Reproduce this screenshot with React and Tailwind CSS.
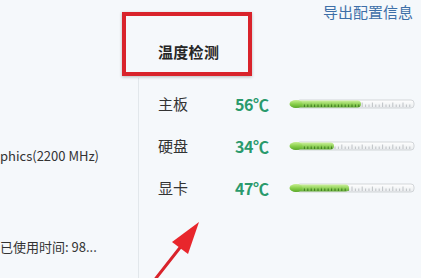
import React from 'react';

const FONT = "font-['Noto_Sans_CJK_SC','Noto_Sans',sans-serif]";

const ROWS = [
  { label: '主板', temp: 56, fill: 72 },
  { label: '硬盘', temp: 34, fill: 45 },
  { label: '显卡', temp: 47, fill: 60 },
];

function Thermo({ fill }) {
  const ticks = [];
  for (let x = 12; x < 122; x += 3.4) ticks.push(x);
  return (
    <svg width="126" height="12" viewBox="0 0 126 12">
      <defs>
        <linearGradient id="tube" x1="0" y1="0" x2="0" y2="1">
          <stop offset="0" stopColor="#ffffff" />
          <stop offset="1" stopColor="#e9ecee" />
        </linearGradient>
        <linearGradient id="green" x1="0" y1="0" x2="0" y2="1">
          <stop offset="0" stopColor="#c8ef92" />
          <stop offset="0.5" stopColor="#8ad04c" />
          <stop offset="1" stopColor="#5aa82a" />
        </linearGradient>
      </defs>
      <rect x="8" y="2" width="117" height="8" rx="3" fill="url(#tube)" stroke="#c9cdd0" strokeWidth="0.8" />
      {ticks.map((x, i) => (
        <line key={i} x1={x} x2={x} y1={i % 3 === 0 ? 4.5 : 6.5} y2="9"
          stroke={x < fill ? '#3f7d22' : '#a9aeb2'} strokeWidth="0.7" />
      ))}
      <rect x="3" y="2.5" width={fill - 3} height="7" rx="3.5" fill="url(#green)" opacity="0.9" />
      {ticks.filter(x => x > 12 && x < fill - 2).map((x, i) => (
        <line key={'d' + i} x1={x} x2={x} y1="6.5" y2="9" stroke="#356d1c" strokeWidth="0.8" />
      ))}
      <ellipse cx="7" cy="6" rx="6.5" ry="4" fill="url(#green)" />
    </svg>
  );
}

export default function App() {
  return (
    <div className={`relative w-[421px] h-[278px] overflow-hidden bg-[#f5f8fb] flex ${FONT}`}>
      {/* left info column */}
      <div className="w-[138px] flex flex-col pt-[147px] text-[13px] leading-[18px] text-[#333] whitespace-nowrap">
        <p>phics(2200 MHz)</p>
        <p className="mt-[73px]">已使用时间: 98...</p>
      </div>
      <div className="w-px self-stretch mt-[78px] bg-[#e2e7eb]" />

      {/* temperature panel */}
      <div className="flex-1 flex flex-col">
        <div className="h-[24px] flex justify-end items-start pt-[3px] pr-[8px]">
          <span className="text-[15px] leading-[17px] text-[#3d6fa8]">导出配置信息</span>
        </div>
        <div className="h-[59px] flex items-center pl-[19px] pb-[3px]">
          <h2 className="text-[15px] font-bold text-[#262626] tracking-[0.3px]">温度检测</h2>
        </div>
        {ROWS.map(r => (
          <div key={r.label} className="h-[42px] flex items-center pl-[19px]">
            <span className="w-[77px] text-[15px] text-[#333]">{r.label}</span>
            <span className="w-[54px] text-[16px] font-bold text-[#2a9a6c] tracking-[-0.5px]">{r.temp}℃</span>
            <Thermo fill={r.fill} />
          </div>
        ))}
      </div>

      {/* annotation: red box */}
      <div className="absolute left-[122px] top-[12px] w-[130px] h-[64px] border-[4px] border-[#d9232b] shadow-[0_1px_3px_rgba(0,0,0,0.25)]" />

      {/* annotation: red arrow */}
      <svg className="absolute left-0 top-0" width="421" height="278" viewBox="0 0 421 278">
        <line x1="153" y1="282" x2="186" y2="240" stroke="#d9232b" strokeWidth="3" strokeLinecap="round" />
        <polygon points="199,222 172,242 188,254" fill="#e8262c" />
      </svg>
    </div>
  );
}
